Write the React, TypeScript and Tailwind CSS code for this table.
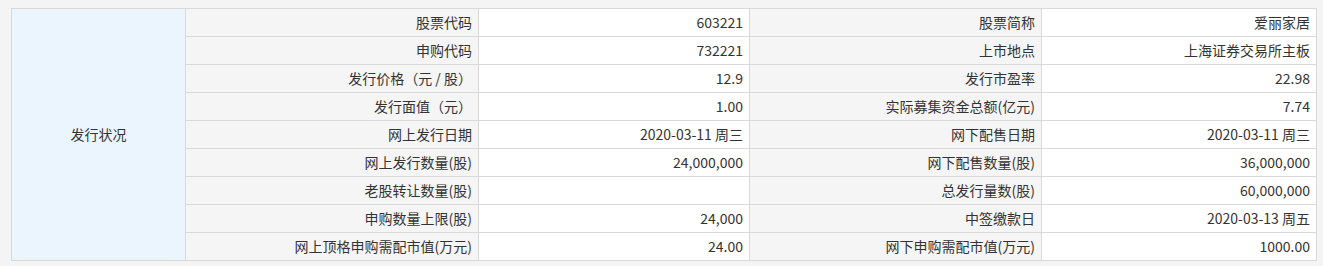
const rows: [string, string, string, string][] = [
  ["股票代码", "603221", "股票简称", "爱丽家居"],
  ["申购代码", "732221", "上市地点", "上海证券交易所主板"],
  ["发行价格（元 / 股）", "12.9", "发行市盈率", "22.98"],
  ["发行面值（元）", "1.00", "实际募集资金总额(亿元)", "7.74"],
  ["网上发行日期", "2020-03-11 周三", "网下配售日期", "2020-03-11 周三"],
  ["网上发行数量(股)", "24,000,000", "网下配售数量(股)", "36,000,000"],
  ["老股转让数量(股)", "", "总发行量数(股)", "60,000,000"],
  ["申购数量上限(股)", "24,000", "中签缴款日", "2020-03-13 周五"],
  ["网上顶格申购需配市值(万元)", "24.00", "网下申购需配市值(万元)", "1000.00"],
];

const cell = "border border-[#d9d9d9] h-[28px] px-[6px] text-right whitespace-nowrap";
const labelCell = `${cell} bg-[#f5f5f5]`;
const valueCell = `${cell} bg-white`;

export default function App() {
  return (
    <div
      className="w-[1323px] h-[266px] bg-[#f4f4f4] pt-[8px] pl-[11px] text-[14px] text-[#333]"
      style={{ fontFamily: '"Microsoft YaHei", "Noto Sans CJK SC", "Noto Sans", sans-serif' }}
    >
      <table className="border-collapse table-fixed w-[1305px]">
        <colgroup>
          <col className="w-[174px]" />
          <col className="w-[293px]" />
          <col className="w-[271px]" />
          <col className="w-[292px]" />
          <col className="w-[275px]" />
        </colgroup>
        <tbody>
          {rows.map((r, i) => (
            <tr key={i}>
              {i === 0 && (
                <td
                  rowSpan={rows.length}
                  className="border border-[#d9d9d9] bg-[#ebf5fe] text-center align-middle"
                >
                  发行状况
                </td>
              )}
              <td className={labelCell}>{r[0]}</td>
              <td className={valueCell}>{r[1]}</td>
              <td className={labelCell}>{r[2]}</td>
              <td className={valueCell}>{r[3]}</td>
            </tr>
          ))}
        </tbody>
      </table>
    </div>
  );
}
